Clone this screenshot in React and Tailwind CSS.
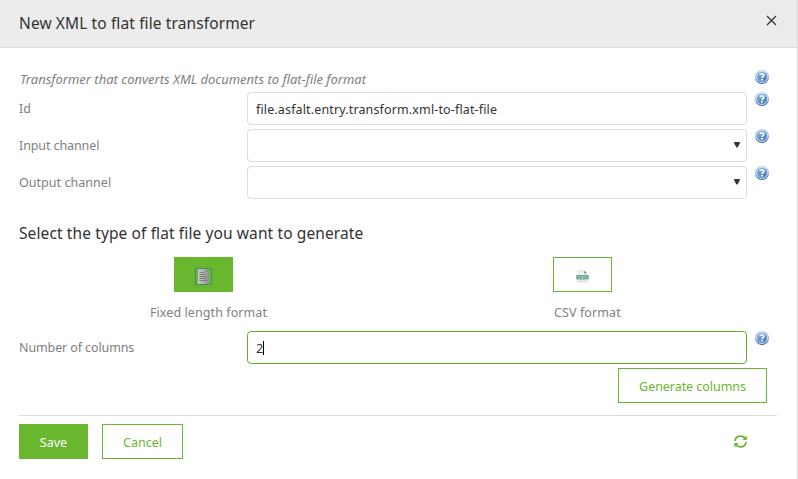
import React from "react";

function HelpIcon() {
  return (
    <svg className="block h-3.5 w-3.5 shrink-0" viewBox="0 0 14 14" aria-label="Help">
      <defs>
        <linearGradient id="ring" x1="0" y1="0" x2="0" y2="1">
          <stop offset="0" stopColor="#c3d7ee" />
          <stop offset="0.6" stopColor="#80a8d6" />
          <stop offset="1" stopColor="#315f9f" />
        </linearGradient>
        <linearGradient id="disc" x1="0" y1="0" x2="1" y2="1">
          <stop offset="0" stopColor="#85afdc" />
          <stop offset="1" stopColor="#4679b8" />
        </linearGradient>
      </defs>
      <circle cx="7" cy="7" r="7" fill="url(#ring)" />
      <circle cx="7" cy="7" r="5.5" fill="url(#disc)" stroke="#dce8f6" strokeWidth="0.9" />
      <path d="M5.1 5.2C5.200 3.2 8.9 3.3 8.8 5.3C8.700 6.500 7.1 6.500 7.1 8" fill="none" stroke="#fff" strokeWidth="1.7" />
      <rect x="6.2" y="9" width="1.8" height="1.5" fill="#fff" />
    </svg>
  );
}

function Row({ label, labelClass, children }) {
  return (
    <div className="flex h-[33px]">
      <div className={"w-[228px] shrink-0 pt-2 leading-[18px] whitespace-nowrap " + labelClass}>{label}</div>
      {children}
      <div className="ml-2">
        <HelpIcon />
      </div>
    </div>
  );
}

function SelectBox() {
  return (
    <div className="flex h-[33px] w-[500px] justify-end rounded-[4px] border border-[#dcdcdc] bg-white pt-[12px] pr-[6px]">
      <svg className="h-[6px] w-[6px]" viewBox="0 0 6 6">
        <path d="M0 0H6L5.500 2L3.500 5.500H2.500L0.500 2Z" fill="#333" />
      </svg>
    </div>
  );
}

function DocumentIcon() {
  return (
    <svg className="block h-[17px] w-[17px]" viewBox="0 0 17 17">
      <defs>
        <linearGradient id="paper" x1="0" y1="0" x2="1" y2="0">
          <stop offset="0" stopColor="#c9cbc9" />
          <stop offset="1" stopColor="#8e918e" />
        </linearGradient>
      </defs>
      <path d="M3 1H11L14 4V16H3Z" fill="url(#paper)" />
      <path d="M11 1V4H14Z" fill="#888f86" />
      <path d="M4.500 4.500H9M4.500 6.500H10M4.500 8.500H12M4.500 10.500H12M4.500 12.500H12" stroke="#707370" strokeWidth="0.8" />
      <rect x="0.5" y="0.5" width="16" height="16" fill="none" stroke="#488a6f" strokeWidth="1" />
    </svg>
  );
}

function CsvIcon() {
  return (
    <svg className="block h-[13px] w-[13px]" viewBox="0 0 13 13">
      <path d="M2 0.500H8.500L11 3V12.500H2Z" fill="#f0f1f0" stroke="#e0e3e1" strokeWidth="0.7" />
      <path d="M8 0.500V3.500H11Z" fill="#8b9590" />
      <rect x="0.3" y="5" width="12.4" height="4.6" rx="0.8" fill="#65a792" />
      <path d="M4 6.300H2.500V8.200H4M7.300 6.300H5.500V7.200H7V8.300H5.200M8.500 6L9.600 8.300L10.700 6" fill="none" stroke="#b8d9ce" strokeWidth="0.7" />
      <path d="M1 10.500H12V12H1Z" fill="#e3e5e4" />
    </svg>
  );
}

function RefreshIcon() {
  return (
    <svg className="block h-[13px] w-[13px]" viewBox="0 0 13 13">
      <path d="M1 5.800C1.400 2.900 3.700 1.100 6.500 1.100C8.400 1.100 9.800 1.800 11 3.200M12 7.200C11.600 10.100 9.300 11.900 6.500 11.900C4.600 11.900 3.200 11.200 2 9.800" fill="none" stroke="#69b62f" strokeWidth="1.8" />
      <path d="M12.700 0.500V4.900H8.300ZM0.300 12.500V8.100H4.700Z" fill="#69b62f" />
    </svg>
  );
}

export default function App() {
  return (
    <div className="h-[479px] w-[798px] overflow-hidden border-r border-[#dcdcdc] bg-white font-['Noto_Sans',sans-serif] text-[12.5px] text-[#808080]">
      <header className="flex h-12 justify-between border-b border-[#dcdcdc] bg-[#ececec] pl-[19px]">
        <h1 className="pt-[12px] text-[15.5px] leading-[22px] tracking-[0.11px] whitespace-nowrap text-[#333]">New XML to flat file transformer</h1>
        <svg className="mt-[15px] mr-[20px] h-[11px] w-[11px]" viewBox="0 0 11 11">
          <path d="M1 1L10 10M10 1L1 10" stroke="#333" strokeWidth="1.3" />
        </svg>
      </header>
      <main className="pr-[20px] pl-[19px]">
        <div className="flex h-[44px] pt-[22px]">
          <p className="w-[736px] pl-px text-[13px] leading-[18px] whitespace-nowrap italic">Transformer that converts XML documents to flat-file format</p>
          <HelpIcon />
        </div>
        <div className="flex flex-col gap-1">
          <Row label="Id" labelClass="tracking-[0px]">
            <div className="h-[33px] w-[500px] rounded-[4px] border border-[#dcdcdc] pt-2 pl-2 leading-[18px] tracking-[0.14px] text-[#333]">file.asfalt.entry.transform.xml-to-flat-file</div>
          </Row>
          <Row label="Input channel" labelClass="tracking-[-0.1px]">
            <SelectBox />
          </Row>
          <Row label="Output channel" labelClass="tracking-[0.04px]">
            <SelectBox />
          </Row>
        </div>
        <h2 className="mt-[23px] text-[15.5px] leading-[22px] tracking-[0.11px] whitespace-nowrap text-[#333]">Select the type of flat file you want to generate</h2>
        <div className="mt-[13px] grid h-[74px] grid-cols-2">
          <div className="flex flex-col pl-[131px]">
            <div className="ml-6 flex h-[35px] w-[59px] justify-center bg-[#69b62f] pt-[11px]">
              <DocumentIcon />
            </div>
            <span className="mt-3 leading-[18px] tracking-[0.08px] whitespace-nowrap">Fixed length format</span>
          </div>
          <div className="flex flex-col pl-[155px]">
            <div className="flex h-[35px] w-[59px] justify-center border border-[#69b62f] pt-[12px]">
              <CsvIcon />
            </div>
            <span className="mt-3 pl-px leading-[18px] tracking-[0.1px] whitespace-nowrap">CSV format</span>
          </div>
        </div>
        <Row label="Number of columns" labelClass="tracking-[-0.11px]">
          <div className="flex h-[33px] w-[500px] rounded-[4px] border border-[#5fae2d] pt-2 pl-2 leading-[18px] text-[#333]">
            <span>2</span>
            <span className="mt-px h-[14px] w-px bg-black" />
          </div>
        </Row>
        <div className="mt-1 flex justify-end pr-[10px]">
          <button className="flex h-[35px] w-[149px] items-center justify-center border border-[#69b62f] pt-[2px] leading-[18px] tracking-[-0.05px] whitespace-nowrap text-[#69b62f]">Generate columns</button>
        </div>
        <footer className="mt-3 flex border-t border-[#dcdcdc] pt-2">
          <button className="h-[35px] w-[69px] bg-[#69b62f] pt-[3px] text-white">Save</button>
          <button className="ml-[14px] h-[35px] w-[81px] border border-[#69b62f] pt-[3px] text-[#69b62f]">Cancel</button>
          <div className="mt-[11px] mr-[30px] ml-auto">
            <RefreshIcon />
          </div>
        </footer>
      </main>
    </div>
  );
}
